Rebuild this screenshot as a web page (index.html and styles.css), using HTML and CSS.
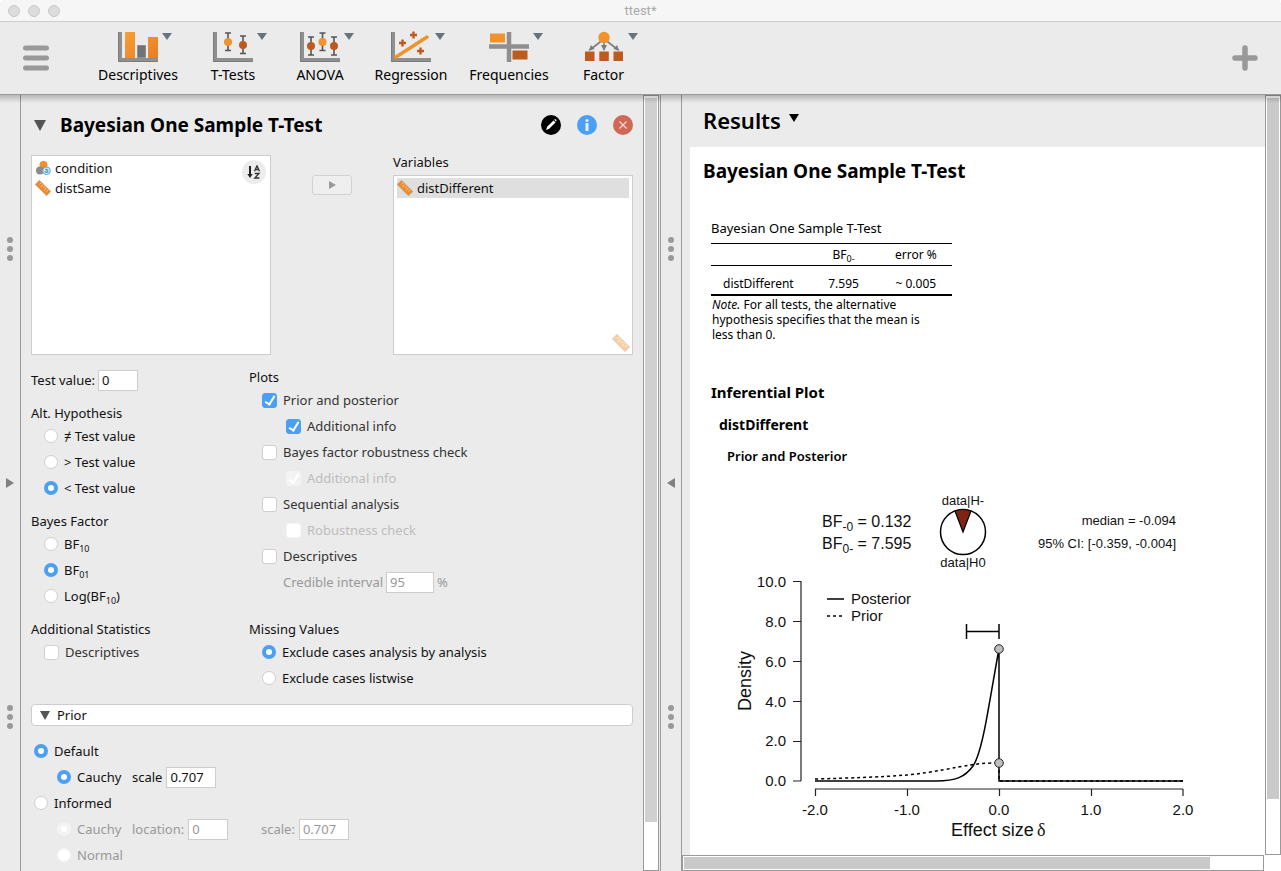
FILE: index.html
```html
<!DOCTYPE html>
<html lang="en">
<head>
<meta charset="utf-8">
<title>ttest*</title>
<link rel="stylesheet" href="styles.css">
</head>
<body>
<svg class="defs" width="0" height="0" aria-hidden="true">
  <defs>
    <linearGradient id="gold" x1="0" y1="0" x2="1" y2="1"><stop offset="0" stop-color="#f5a034"/><stop offset="1" stop-color="#e97d25"/></linearGradient>
    <symbol id="ruler" viewBox="0 0 16 16">
      <g transform="rotate(45 8 8)"><rect x="0" y="5" width="16" height="6" fill="#f08a27" stroke="#a9a39b" stroke-width=".7"/><path d="M3 5.500v2.500M5.500 5.500v3.500M8 5.500v2.500M10.500 5.500v3.500M13 5.500v2.500" stroke="#fbd09b" stroke-width=".9"/></g>
    </symbol>
    <symbol id="axes" viewBox="0 0 40 31"><path d="M2 1v28h38" fill="none" stroke="#8f8f8f" stroke-width="4"/><path d="M.5 1v29.500H40" fill="none" stroke="#7c7c7c" stroke-width="1"/></symbol>
  </defs>
</svg>
<div class="window">
  <header class="titlebar">
    <div class="lights"><span></span><span></span><span></span></div>
    <div class="title">ttest*</div>
  </header>
  <nav class="toolbar">
    <button class="menu" aria-label="Menu"><svg width="26" height="26" viewBox="0 0 26 26"><path d="M2.500 3h21M2.500 13h21M2.500 23h21" stroke="#999" stroke-width="5" stroke-linecap="round"/></svg></button>
    <div class="tools">
      <button class="tool"><span class="pic"><svg width="40" height="31" viewBox="0 0 40 31"><use href="#axes" width="40" height="31"/><path fill="url(#gold)" d="M7 1h10v26H7zM30 6h10v21H30z"/><path fill="#6d7377" stroke="#8d8d8d" d="M19.500 14.500h8v12h-8z"/></svg><i class="caret"></i></span>Descriptives</button>
      <button class="tool"><span class="pic"><svg width="40" height="31" viewBox="0 0 40 31"><use href="#axes" width="40" height="31"/><path d="M12 2h6M15 2v17M12 19.500h6M27 5h6M30 5v17M27 22.500h6" stroke="#555" stroke-width="1.600"/><circle cx="15" cy="11" r="4" fill="#f0932b"/><circle cx="30" cy="14" r="4" fill="#bc5a20"/></svg><i class="caret"></i></span>T-Tests</button>
      <button class="tool"><span class="pic"><svg width="40" height="31" viewBox="0 0 40 31"><use href="#axes" width="40" height="31"/><path d="M8 6h6M11 6v18M8 24h6M19.500 2h6M22.500 2v17M19.500 19.500h6M31 6h6M34 6v18M31 24h6" stroke="#555" stroke-width="1.600"/><circle cx="11" cy="15" r="4" fill="#bc5a20"/><circle cx="22.500" cy="11" r="4" fill="#f0932b"/><circle cx="34" cy="15" r="4" fill="#bc5a20"/></svg><i class="caret"></i></span>ANOVA</button>
      <button class="tool"><span class="pic"><svg width="40" height="31" viewBox="0 0 40 31"><use href="#axes" width="40" height="31"/><path d="M5 26L36 6" stroke="#f0932b" stroke-width="3.500" stroke-linecap="round"/><path d="M8 12h7M11.500 8.500v7M19 4h7M22.500.500v7M26 20h7M29.500 16.500v7" stroke="#bc5a20" stroke-width="2.400"/></svg><i class="caret"></i></span>Regression</button>
      <button class="tool"><span class="pic"><svg width="40" height="31" viewBox="0 0 40 31"><path d="M20 1v30M0 15.500h40" stroke="#8f8f8f" stroke-width="4.500"/><path fill="#f0932b" d="M1 2.500h15v9H1z"/><path fill="#bc5a20" d="M23.500 19.500h15v9h-15z"/></svg><i class="caret"></i></span>Frequencies</button>
      <button class="tool"><span class="pic"><svg width="40" height="31" viewBox="0 0 40 31"><path d="M20 8L7 18M20 8v11M20 8l13 10" stroke="#7d7d7d" stroke-width="1.600"/><path fill="#7d7d7d" d="M4.500 20l2.500-6 3.500 4zM17 14h6l-3 6zM35.500 20l-2.500-6-3.500 4z"/><circle cx="20" cy="6.500" r="5.700" fill="#f0932b"/><path fill="#bc5a20" d="M1 20.500h9.500v9.500H1zM15.300 20.500h9.500v9.500h-9.500zM29.500 20.500H39v9.500h-9.500z"/></svg><i class="caret"></i></span>Factor</button>
    </div>
    <button class="add" aria-label="Add module"><svg width="26" height="26" viewBox="0 0 26 26"><path d="M3 13h20M13 3v20" stroke="#999" stroke-width="5.500" stroke-linecap="round"/></svg></button>
  </nav>
  <main class="content">
    <div class="rail">
      <span class="grip"><i></i><i></i><i></i></span>
      <button class="fold right" aria-label="Show data"></button>
      <span class="grip"><i></i><i></i><i></i></span>
    </div>
    <section class="form">
      <div class="form-head">
        <i class="tri big"></i>
        <h1>Bayesian One Sample T-Test</h1>
        <div class="actions">
          <button aria-label="Edit title"><svg width="20" height="20" viewBox="0 0 20 20"><circle cx="10" cy="10" r="10"/><path d="M5 15l1.200-3.200L12.500 5.500l2 2L8.200 13.800z" fill="#fff"/><path d="M13.200 4.800l.6-.5q.7-.3 1.300.3t.3 1.300l-.5.600z" fill="#fff"/></svg></button>
          <button aria-label="Help"><svg width="20" height="20" viewBox="0 0 20 20"><circle cx="10" cy="10" r="10" fill="#4b9ff5"/><path d="M10 8v8" stroke="#e4f0fd" stroke-width="3"/><circle cx="10" cy="5.500" r="1.600" fill="#e4f0fd"/></svg></button>
          <button aria-label="Remove"><svg width="20" height="20" viewBox="0 0 20 20"><circle cx="10" cy="10" r="10" fill="#cf6956"/><path d="M6.500 6.500l7 7M13.500 6.500l-7 7" stroke="#f6dcd6" stroke-width="1.100"/></svg></button>
        </div>
      </div>
      <div class="assign">
        <div class="varbox">
          <button class="sort" aria-label="Sort"><svg width="14" height="14" viewBox="0 0 14 14"><path d="M3 1v9" stroke="#222" stroke-width="2"/><path d="M.3 9h5.400L3 13z" fill="#222"/><path d="M7.500 6.200L10 .8l2.500 5.400M8.300 4.500h3.400M7.800 8.500h4.200L7.800 13h4.600" fill="none" stroke="#333" stroke-width="1.300"/></svg></button>
          <ul>
            <li><svg width="16" height="16" viewBox="0 0 16 16"><circle cx="8.500" cy="5" r="4" fill="#f0902a"/><circle cx="5" cy="10.500" r="4" fill="#8b8b8b"/><circle cx="11.500" cy="10.800" r="3.800" fill="#d9eef8" stroke="#55a9d5"/><path d="M10 9.500q2.800-1.200 2.800.8v2.400M12.800 10.800q-3 0-3 1 .5 1.400 3 .2" fill="none" stroke="#3a9bd0"/></svg>condition</li>
            <li><svg width="16" height="16"><use href="#ruler"/></svg>distSame</li>
          </ul>
        </div>
        <button class="move" aria-label="Move variable"><i></i></button>
        <div class="target">
          <h2>Variables</h2>
          <div class="varbox">
            <ul><li class="selected"><svg width="16" height="16"><use href="#ruler"/></svg>distDifferent</li></ul>
            <svg class="allowed" width="18" height="18"><use href="#ruler"/></svg>
          </div>
        </div>
      </div>
      <div class="options">
        <div class="column">
          <label class="row plain">Test value: <input class="text w40" type="text" value="0"></label>
          <fieldset><legend>Alt. Hypothesis</legend>
            <label class="row"><input type="radio" name="alt">≠ Test value</label>
            <label class="row"><input type="radio" name="alt">&gt; Test value</label>
            <label class="row"><input type="radio" name="alt" checked>&lt; Test value</label>
          </fieldset>
          <fieldset><legend>Bayes Factor</legend>
            <label class="row"><input type="radio" name="bf"><span>BF<sub>10</sub></span></label>
            <label class="row"><input type="radio" name="bf" checked><span>BF<sub>01</sub></span></label>
            <label class="row"><input type="radio" name="bf"><span>Log(BF<sub>10</sub>)</span></label>
          </fieldset>
        </div>
        <fieldset class="checks"><legend>Plots</legend>
          <label class="row"><input type="checkbox" checked>Prior and posterior</label>
          <label class="row sub"><input type="checkbox" checked>Additional info</label>
          <label class="row"><input type="checkbox">Bayes factor robustness check</label>
          <label class="row sub off"><input type="checkbox" checked disabled>Additional info</label>
          <label class="row"><input type="checkbox">Sequential analysis</label>
          <label class="row sub off"><input type="checkbox" disabled>Robustness check</label>
          <label class="row"><input type="checkbox">Descriptives</label>
          <label class="row interval">Credible interval <input class="text w48" type="text" value="95" disabled> %</label>
        </fieldset>
        <fieldset class="checks"><legend>Additional Statistics</legend>
          <label class="row"><input type="checkbox">Descriptives</label>
        </fieldset>
        <fieldset><legend>Missing Values</legend>
          <label class="row"><input type="radio" name="missing" checked>Exclude cases analysis by analysis</label>
          <label class="row"><input type="radio" name="missing">Exclude cases listwise</label>
        </fieldset>
      </div>
      <button class="section"><i class="tri"></i>Prior</button>
      <div class="prior">
        <label class="row"><input type="radio" name="prior" checked>Default</label>
        <div class="row nested"><label class="dist"><input type="radio" name="default" checked>Cauchy</label><label class="field">scale <input class="text w50" type="text" value="0.707"></label></div>
        <label class="row"><input type="radio" name="prior">Informed</label>
        <div class="row nested dim"><label class="dist"><input type="radio" name="informed" checked disabled>Cauchy</label><label class="field first">location: <input class="text w40" type="text" value="0" disabled></label><label class="field">scale: <input class="text w50" type="text" value="0.707" disabled></label></div>
        <div class="row nested dim"><label class="dist"><input type="radio" name="informed" disabled>Normal</label></div>
      </div>
    </section>
    <div class="vscroll form-scroll"><i></i></div>
    <div class="rail middle">
      <span class="grip"><i></i><i></i><i></i></span>
      <button class="fold left" aria-label="Hide results"></button>
      <span class="grip"><i></i><i></i><i></i></span>
    </div>
    <section class="results">
      <div class="results-main">
        <div class="page">
          <h1 class="results-title">Results <i></i></h1>
          <article class="sheet">
            <h2>Bayesian One Sample T-Test</h2>
            <table>
              <caption>Bayesian One Sample T-Test</caption>
              <thead><tr><th class="name"></th><th>BF<sub>0-</sub></th><th>error %</th></tr></thead>
              <tbody><tr><td>distDifferent</td><td>7.595</td><td>~ 0.005</td></tr></tbody>
              <tfoot><tr><td colspan="3"><em>Note.</em> For all tests, the alternative hypothesis specifies that the mean is less than 0.</td></tr></tfoot>
            </table>
            <h3>Inferential Plot</h3>
            <h4>distDifferent</h4>
            <h5>Prior and Posterior</h5>
            <svg class="plot" width="500" height="375" viewBox="0 0 500 375" role="img" aria-label="Prior and posterior density of effect size">
              <g class="t16"><text x="111" y="48">BF<tspan dy="4" font-size="12">-0</tspan><tspan dy="-4"> = 0.132</tspan></text><text x="111" y="70">BF<tspan dy="4" font-size="12">0-</tspan><tspan dy="-4"> = 7.595</tspan></text></g>
              <g class="t13"><text x="252" y="26" text-anchor="middle">data|H-</text><text x="252" y="88" text-anchor="middle">data|H0</text><text x="465" y="46" text-anchor="end">median = -0.094</text><text x="465" y="69" text-anchor="end">95% CI: [-0.359, -0.004]</text></g>
              <circle cx="252" cy="53" r="22.500" class="line"/>
              <path d="M252 53L244 32A22.500 22.500 0 0 1 260 32Z" fill="#7f2412" stroke="#000" stroke-width="1.200"/>
              <path class="line axis" d="M90 102V302M82 102.500h8M82 142.500h8M82 182.500h8M82 222.500h8M82 262.500h8M82 302h8M104 310H472M104.500 310v7M196.500 310v7M288.500 310v7M380.500 310v7M472 310v7"/>
              <g class="t15" text-anchor="end"><text x="75" y="108">10.0</text><text x="75" y="148">8.0</text><text x="75" y="188">6.0</text><text x="75" y="228">4.0</text><text x="75" y="267">2.0</text><text x="75" y="307">0.0</text></g>
              <g class="t15" text-anchor="middle"><text x="104" y="336">-2.0</text><text x="196" y="336">-1.0</text><text x="288" y="336">0.0</text><text x="380" y="336">1.0</text><text x="472" y="336">2.0</text></g>
              <g class="t18"><text x="240" y="357">Effect size</text><text x="326" y="357" font-family="Liberation Serif, serif">δ</text><text transform="translate(40 202) rotate(-90)" text-anchor="middle">Density</text></g>
              <path class="line" d="M116 120h17"/><path class="line dots" d="M116 137h17"/>
              <g class="t15"><text x="140" y="125">Posterior</text><text x="140" y="142">Prior</text></g>
              <path class="line" d="M255 152.500h33M255.500 145v15M288 145v15"/>
              <path class="line dots" d="M104 300C140 299 170 298 196 296C222 293.500 245 288 260 286C270 284 280 284 288 284V302H472"/>
              <path class="line" d="M104 302H225C245 302 254 298 262 287C270 275 274 248 277 232C281 210 286 180 288 170V302H472"/>
              <circle cx="288" cy="170" r="4.300" class="dot"/><circle cx="288" cy="284" r="4.300" class="dot"/>
            </svg>
          </article>
        </div>
        <div class="vscroll results-scroll"><i></i></div>
      </div>
      <div class="hscroll"><i></i></div>
    </section>
  </main>
</div>
</body>
</html>
```
FILE: styles.css
```css
* { box-sizing: border-box; }
body { margin: 0; background: #fff; color: #111; font: 13px/20px "Noto Sans", "Open Sans", sans-serif; }
h1, h2, h3, h4, h5, ul, fieldset, legend { margin: 0; padding: 0; border: 0; font-weight: inherit; font-size: inherit; }
button { font: inherit; color: inherit; background: none; border: 0; padding: 0; }
svg { display: block; flex: none; }
.defs { position: absolute; }
.window { height: 100vh; display: flex; flex-direction: column; background: #ebebeb; border-radius: 5px 5px 0 0; overflow: hidden; }

.titlebar { flex: none; height: 22px; display: grid; grid-template-columns: 100px 1fr 100px; align-items: center; background: #f6f6f6; border-bottom: 1px solid #cdcdcd; }
.lights { display: flex; gap: 8px; padding-left: 8px; }
.lights span { width: 12px; height: 12px; border-radius: 50%; background: #dcdcdc; border: 1px solid #c9c9c9; }
.title { text-align: center; font: 13px/20px Roboto, sans-serif; color: #a9a9a9; }

.toolbar { flex: none; height: 73px; display: flex; align-items: center; padding: 0 23px; border-bottom: 1px solid #999; }
.tools { flex: 1; display: grid; grid-template-columns: 96px 94px 80px 102px 94px 95px; margin-left: 41px; }
.tool { display: flex; flex-direction: column; align-items: center; gap: 3px; font-size: 14px; line-height: 20px; color: #000; white-space: nowrap; }
.pic { position: relative; }
.caret { position: absolute; top: 2px; left: 44px; border: 5px solid transparent; border-top: 7px solid #68747c; border-bottom: 0; }

.content { flex: 1; min-height: 0; display: flex; position: relative; }
.content::before { content: ""; position: absolute; z-index: 2; inset: 0 0 auto; height: 8px; background: linear-gradient(rgba(0,0,0,.22), rgba(0,0,0,0)); }
.rail { flex: none; width: 21px; border-right: 1px solid #999; display: flex; flex-direction: column; align-items: center; justify-content: space-between; padding: 142px 0; }
.rail.middle { width: 22px; border-left: 1px solid #999; }
.grip { display: grid; gap: 3px; }
.grip i { width: 6px; height: 6px; border-radius: 50%; background: #999; }
.fold { border: 5px solid transparent; }
.fold.right { border-left: 8px solid #808080; border-right: 0; }
.fold.left { border-right: 8px solid #808080; border-left: 0; }

.form { flex: 602 1 0; min-width: 0; padding: 0 10px; overflow: hidden; }
.form-head { height: 60px; display: flex; align-items: center; }
.tri { border: 5px solid transparent; border-top: 9px solid #555; border-bottom: 0; }
.tri.big { border-width: 11px 6px 0; margin-left: 3px; }
.form-head h1 { margin-left: 14px; flex: 1; font-size: 19px; font-weight: 700; color: #000; }
.actions { display: flex; gap: 16px; }
.assign { height: 200px; display: grid; grid-template-columns: 1fr 122px 1fr; }
.varbox { position: relative; background: #fff; border: 1px solid #cdcdcd; padding: 2px 3px; }
.varbox ul { list-style: none; }
.varbox li { height: 20px; display: flex; align-items: center; gap: 4px; }
.target .varbox { flex: 1; }
.selected { background: #dfdfdf; }
.sort { position: absolute; top: 4px; right: 4px; width: 24px; height: 24px; border-radius: 50%; background: #ececec; display: grid; place-items: center; }
.move { margin: 20px 41px; height: 20px; border: 1px solid #d2d2d2; border-radius: 3px; background: #efefef; display: grid; place-items: center; }
.move i { border: 4px solid transparent; border-left: 7px solid #999; border-right: 0; }
.target { display: flex; flex-direction: column; }
.target h2 { height: 20px; line-height: 14px; }
.allowed { position: absolute; right: 2px; bottom: 2px; opacity: .42; }

.options { margin-top: 12px; display: grid; grid-template-columns: 218px 1fr; row-gap: 10px; align-items: start; }
.column { display: grid; gap: 10px; }
legend { display: block; height: 20px; }
.row { display: flex; align-items: center; height: 26px; gap: 6px; padding-left: 13px; white-space: nowrap; }
.row.plain { padding-left: 0; gap: 3px; }
.checks .row { color: #333; }
.checks .sub { padding-left: 37px; }
.checks .off { color: #bdbdbd; }
.checks .interval { padding-left: 34px; gap: 3px; color: #999; }
sub { font-size: 9px; line-height: 0; vertical-align: -3px; }
input { margin: 0; flex: none; background: #fff; }
input[type="radio"], input[type="checkbox"] { appearance: none; width: 14px; height: 14px; border: 1px solid #cfcfcf; border-radius: 50%; }
input[type="radio"]:checked { border: 4px solid #4b9ff5; }
input[type="radio"]:disabled { border-color: #f3f3f3; }
input[type="checkbox"] { width: 15px; height: 15px; border-radius: 3px; display: grid; place-items: center; }
input[type="checkbox"]:checked { background: #4b9ff5; border-color: #4b9ff5; }
input[type="checkbox"]:disabled { border-color: #f5f5f5; }
input[type="checkbox"]:checked:disabled { background: #f3f3f3; border-color: #f3f3f3; }
input[type="checkbox"]:checked::before { content: ""; width: 4px; height: 9px; margin-bottom: 2px; border: solid #fff; border-width: 0 2px 2px 0; transform: rotate(32deg); }
.text { height: 21px; border: 1px solid #cdcdcd; padding: 0 3px; font: inherit; color: #111; }
.text:disabled { color: #999; }
.w40 { width: 40px; }
.w48 { width: 48px; }
.w50 { width: 50px; }
.section { width: 100%; height: 22px; margin: 13px 0 12px; display: flex; align-items: center; gap: 7px; padding-left: 8px; background: #fff; border: 1px solid #cdcdcd; border-radius: 4px; }
.prior .row { padding-left: 3px; }
.prior .nested { padding-left: 26px; gap: 0; }
.dist, .field { display: flex; align-items: center; gap: 6px; }
.dist { width: 75px; }
.field { gap: 4px; }
.field.first { width: 129px; }
.dim { color: #999; }

.vscroll { flex: none; background: #fff; border: 1px solid #999; padding: 2px 1px; }
.vscroll i { display: block; background: #d0d0d0; }
.form-scroll { width: 16px; margin-right: 1px; }
.form-scroll i { height: 94%; }
.results { flex: 599 1 0; min-width: 0; display: flex; flex-direction: column; background: #fff; }
.results-main { flex: 1; min-height: 0; display: flex; }
.page { flex: 1; min-width: 0; padding-left: 8px; display: flex; flex-direction: column; overflow: hidden; background: #ebebeb; }
.results-title { flex: none; height: 52px; padding: 0 0 2px 13px; font-size: 22px; font-weight: 600; color: #000; display: flex; align-items: center; gap: 8px; }
.results-title i { border: 5px solid transparent; border-top: 8px solid #000; border-bottom: 0; margin-bottom: 4px; }
.sheet { flex: 1; min-height: 0; background: #fff; padding: 13px 13px 0; color: #000; }
.sheet h2 { font-size: 19px; font-weight: 700; line-height: 22px; }
table { width: 241px; margin: 34px 0 0 8px; border-collapse: collapse; table-layout: fixed; font-size: 12px; line-height: 15px; }
caption { text-align: left; height: 27px; font-size: 13px; line-height: 24px; }
thead tr { height: 22px; border-top: 1px solid #000; border-bottom: 1px solid #000; }
th { font-weight: 400; padding: 0; }
.name { width: 40%; }
tbody tr { height: 29px; border-bottom: 2px solid #000; }
tbody td { padding: 7px 0 0; text-align: center; }
tbody td:first-child { text-align: left; padding-left: 12px; }
tfoot td { padding: 1px 12px 0 1px; }
.sheet h3 { margin: 38px 0 0 8px; font-size: 15px; font-weight: 700; line-height: 24px; }
.sheet h4 { margin: 9px 0 0 16px; font-size: 14px; font-weight: 700; line-height: 24px; }
.sheet h5 { margin: 8px 0 0 24px; font-size: 13px; font-weight: 600; line-height: 22px; }
.plot { margin: 12px 0 0 8px; font-family: "Liberation Sans", Arial, sans-serif; fill: #111; }
.t13 { font-size: 13px; }
.t15 { font-size: 15px; }
.t16 { font-size: 16px; }
.t18 { font-size: 18px; }
.line { fill: none; stroke: #000; stroke-width: 1.5; }
.axis { stroke: #222; stroke-width: 1.2; }
.dots { stroke-dasharray: 3 3; }
.dot { fill: #bebebe; stroke: #222; }
.results-scroll { width: 16px; }
.results-scroll i { height: 93%; background: #c9c9c9; }
.hscroll { flex: none; height: 16px; margin-right: 17px; border: 1px solid #999; padding: 1px; background: #fff; }
.hscroll i { display: block; height: 12px; width: 91%; background: #c9c9c9; }
```
